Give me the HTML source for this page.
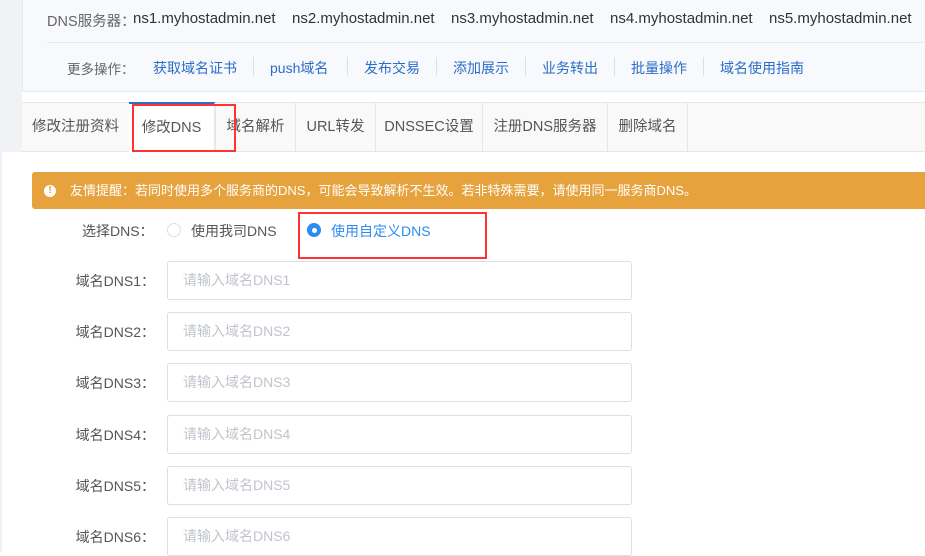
<!DOCTYPE html>
<html><head><meta charset="utf-8"><style>
*{margin:0;padding:0;box-sizing:border-box}
body{width:925px;height:552px;overflow:hidden;background:#fff;font-family:"Liberation Sans","Noto Sans CJK SC",sans-serif;font-size:14px;color:#333;position:relative}
.abs{position:absolute;white-space:nowrap}
.strip{position:absolute;left:0;top:0;width:22px;height:152px;background:#f0f2f5}
.strip2{position:absolute;left:0;top:152px;width:2px;height:400px;background:#f0f2f5}
.top{position:absolute;left:22px;top:0;width:903px;height:92px;background:#f7f9fc;border-bottom:1px solid #e6e9ee;border-left:1px solid #e6e9ee}
.div{position:absolute;left:47px;top:42px;width:878px;height:1px;background:#e6e9ee}
.lnk{color:#2a6dc9;font-size:14px}
.sep{position:absolute;top:57px;width:1px;height:19px;background:#dcdfe6}
.tabs{position:absolute;left:22px;top:102px;width:903px;height:50px;background:#f9f9f9;border-top:1px solid #e6e6e6;border-bottom:1px solid #e6e6e6}
.tab{position:absolute;top:0;height:48px;line-height:48px;text-align:center;color:#555;font-size:14.5px;border-right:1px solid #e6e6e6}
.red{position:absolute;border:2.5px solid #f33}
.alert{position:absolute;left:32px;top:172px;width:900px;height:37px;background:#e6a23c;border-radius:3px;color:#fff;font-size:13px;line-height:37px;padding-left:38px}
.ic{position:absolute;left:12px;top:13px;width:12px;height:12px;border-radius:50%;background:#fff;color:#e6a23c;font-size:10px;font-weight:bold;line-height:12px;text-align:center}
.lbl{position:absolute;width:155px;text-align:right;color:#555;font-size:14px}
.inp{position:absolute;left:167px;width:465px;height:39px;border:1px solid #dcdfe6;border-radius:3px;color:#c0c4cc;font-size:14px;line-height:37px;padding-left:15px}
.ns{position:absolute;top:10px;font-size:15px;color:#333;white-space:nowrap}
</style></head><body>
<div class="strip"></div><div class="strip2"></div>
<div class="top"></div>
<div class="abs" style="left:47px;top:10px;color:#666;font-size:14.5px">DNS服务器：</div>
<div class="ns" style="left:133px">ns1.myhostadmin.net</div>
<div class="ns" style="left:292px">ns2.myhostadmin.net</div>
<div class="ns" style="left:451px">ns3.myhostadmin.net</div>
<div class="ns" style="left:610px">ns4.myhostadmin.net</div>
<div class="ns" style="left:769px">ns5.myhostadmin.net</div>
<div class="div"></div>
<div class="abs" style="left:67px;top:58px;color:#666;font-size:13.5px">更多操作：</div>
<div class="abs lnk" style="left:153px;top:58px">获取域名证书</div>
<div class="sep" style="left:253px"></div>
<div class="abs lnk" style="left:270px;top:58px">push域名</div>
<div class="sep" style="left:347px"></div>
<div class="abs lnk" style="left:364px;top:58px">发布交易</div>
<div class="sep" style="left:436px"></div>
<div class="abs lnk" style="left:453px;top:58px">添加展示</div>
<div class="sep" style="left:525px"></div>
<div class="abs lnk" style="left:542px;top:58px">业务转出</div>
<div class="sep" style="left:614px"></div>
<div class="abs lnk" style="left:631px;top:58px">批量操作</div>
<div class="sep" style="left:703px"></div>
<div class="abs lnk" style="left:720px;top:58px">域名使用指南</div>
<div class="tabs">
<div class="tab" style="left:0;width:107px;border-right:none">修改注册资料</div>
<div class="tab" style="left:107px;width:86px;background:#fff;border-top:2px solid #2a6dc9;top:-1px;height:50px">修改DNS</div>
<div class="tab" style="left:193px;width:81px;border-left:1px solid #e6e6e6">域名解析</div>
<div class="tab" style="left:274px;width:80px">URL转发</div>
<div class="tab" style="left:354px;width:107px">DNSSEC设置</div>
<div class="tab" style="left:461px;width:125px">注册DNS服务器</div>
<div class="tab" style="left:586px;width:80px">删除域名</div>
</div>
<div class="red" style="left:132px;top:104px;width:104px;height:48px"></div>
<div class="alert"><div class="ic">!</div>友情提醒：若同时使用多个服务商的DNS，可能会导致解析不生效。若非特殊需要，请使用同一服务商DNS。</div>
<div class="abs" style="left:82px;top:221px;color:#555">选择DNS：</div>
<div class="abs" style="left:167px;top:223px;width:14px;height:14px;border:1px solid #dcdfe6;border-radius:50%"></div>
<div class="abs" style="left:191px;top:221px;color:#555">使用我司DNS</div>
<div class="abs" style="left:307px;top:223px;width:14px;height:14px;border-radius:50%;background:#2d8cf0"><div style="position:absolute;left:4.5px;top:4.5px;width:5px;height:5px;border-radius:50%;background:#fff"></div></div>
<div class="abs" style="left:331px;top:221px;color:#2d8cf0">使用自定义DNS</div>
<div class="red" style="left:298px;top:212px;width:189px;height:47px"></div>
<div class="lbl" style="top:271px">域名DNS1：</div><div class="inp" style="top:261px">请输入域名DNS1</div>
<div class="lbl" style="top:322px">域名DNS2：</div><div class="inp" style="top:312px">请输入域名DNS2</div>
<div class="lbl" style="top:373px">域名DNS3：</div><div class="inp" style="top:363px">请输入域名DNS3</div>
<div class="lbl" style="top:425px">域名DNS4：</div><div class="inp" style="top:415px">请输入域名DNS4</div>
<div class="lbl" style="top:476px">域名DNS5：</div><div class="inp" style="top:466px">请输入域名DNS5</div>
<div class="lbl" style="top:527px">域名DNS6：</div><div class="inp" style="top:517px">请输入域名DNS6</div>
</body></html>
